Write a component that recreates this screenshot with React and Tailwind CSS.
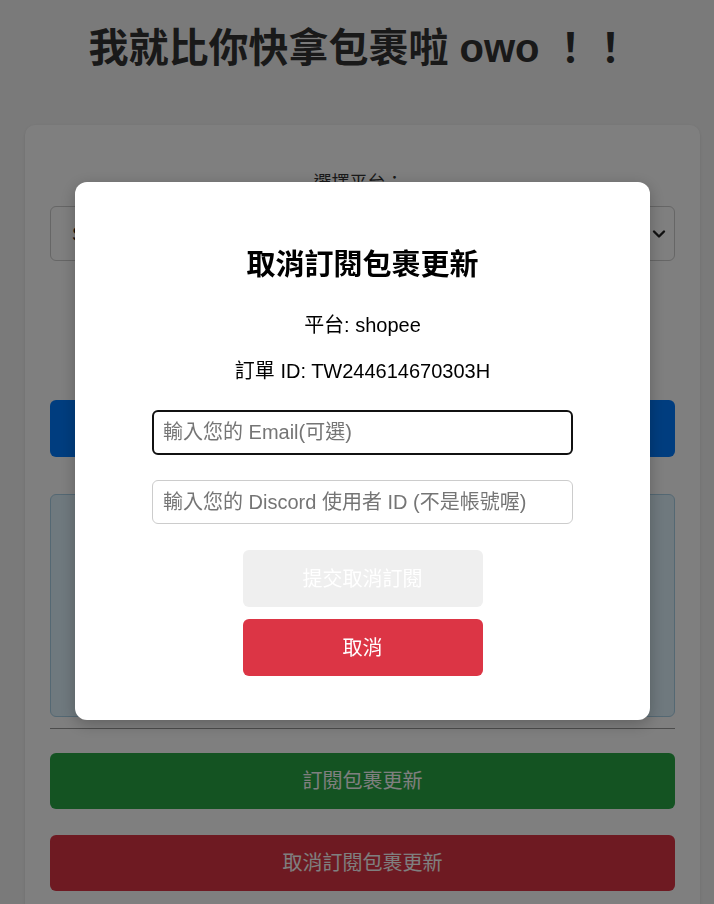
import React from "react";

const FONT = { fontFamily: '"Liberation Sans", "Noto Sans CJK TC", sans-serif' };

export default function App() {
  return (
    <div className="relative min-h-[904px] bg-[#f4f4f4] text-[#333]" style={FONT}>
      <h1 className="pt-[25px] pl-[5px] text-center text-[40px] leading-[46px] font-bold text-[#333]">
        我就比你快拿包裹啦 owo ！！
      </h1>

      <div className="ml-[25px] mt-[54px] w-[675px] rounded-[10px] bg-white px-[25px] pt-[47px] pb-[30px] shadow-sm">
        <label className="block pr-[8px] text-center text-[18px] leading-[22px] text-[#333]">選擇平台：</label>
        <div className="mt-[12px] flex h-[55px] items-center justify-between rounded-[6px] border border-[#ccc] bg-white pl-[21px] pr-[8px] text-[20px] text-[#222]">
          <span>Shopee</span>
          <svg width="14" height="10" viewBox="0 0 14 10" fill="none">
            <path d="M2 2.5 L7 7.5 L12 2.5" stroke="#222" strokeWidth="2.4" strokeLinecap="round" strokeLinejoin="round" />
          </svg>
        </div>

        <div className="mt-[139px] flex h-[57px] items-center justify-center rounded-[6px] bg-[#007bff] text-[20px] text-white">
          查詢包裹
        </div>

        <div className="mt-[37px] h-[223px] rounded-[6px] border border-[#a8d0e6] bg-[#dff3fc]"></div>

        <hr className="mt-[11px] border-t border-[#999]" />

        <div className="mt-[24px] flex h-[56px] items-center justify-center rounded-[6px] bg-[#28a745] text-[20px] text-white">
          訂閱包裹更新
        </div>
        <div className="mt-[26px] flex h-[56px] items-center justify-center rounded-[6px] bg-[#dc3545] text-[20px] text-white">
          取消訂閱包裹更新
        </div>
      </div>

      <div className="fixed inset-0 flex items-center justify-center bg-black/50 pb-[2px] pl-[11px]">
        <div className="flex w-[575px] flex-col items-center rounded-[12px] bg-white pt-[66px] pb-[44px] shadow-[0_4px_16px_rgba(0,0,0,0.25)]">
          <h2 className="text-[29px] leading-[35px] font-bold text-black">取消訂閱包裹更新</h2>
          <p className="mt-[30px] text-[20px] leading-[24px] text-black">平台: shopee</p>
          <p className="mt-[22px] text-[20px] leading-[24px] text-black">訂單 ID: TW244614670303H</p>
          <input
            className="mt-[27px] h-[45px] w-[421px] rounded-[6px] border-2 border-[#111] px-[9px] text-[20px] text-black outline-none placeholder:text-[#757575]"
            placeholder="輸入您的 Email(可選)"
            style={FONT}
          />
          <input
            className="mt-[25px] h-[44px] w-[421px] rounded-[6px] border border-[#ccc] px-[10px] text-[20px] text-black outline-none placeholder:text-[#757575]"
            placeholder="輸入您的 Discord 使用者 ID (不是帳號喔)"
            style={FONT}
          />
          <button
            className="mt-[26px] h-[57px] w-[240px] rounded-[6px] bg-[#efefef] text-[20px] text-white"
            style={FONT}
          >
            提交取消訂閱
          </button>
          <button
            className="mt-[12px] h-[57px] w-[240px] rounded-[6px] bg-[#dc3545] text-[20px] text-white"
            style={FONT}
          >
            取消
          </button>
        </div>
      </div>
    </div>
  );
}
